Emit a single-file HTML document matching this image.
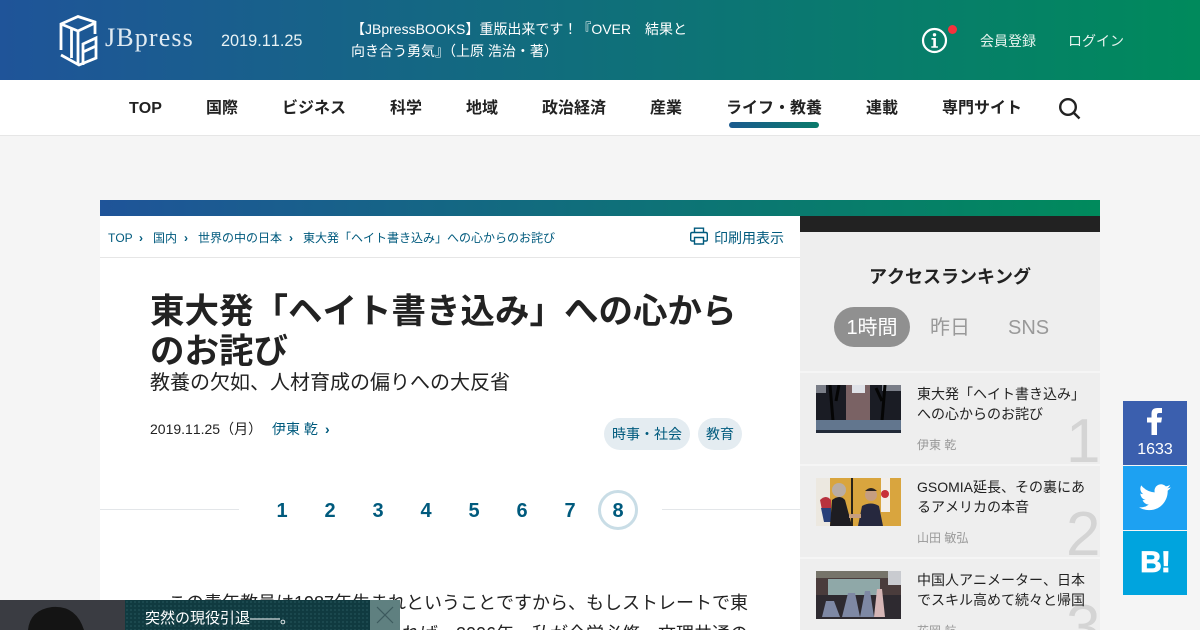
<!DOCTYPE html>
<html lang="ja"><head><meta charset="utf-8"><title>JBpress</title>
<style>
*{box-sizing:border-box;margin:0;padding:0}
html,body{width:1200px;height:630px;overflow:hidden}
body{position:relative;background:#f5f5f5;font-family:"Liberation Sans","Noto Sans CJK JP",sans-serif;color:#222;font-kerning:none}
.a{position:absolute;white-space:nowrap}
.grad{background:linear-gradient(90deg,#1f5499 0%,#008a5c 100%)}
.b{font-weight:bold}
.l{color:#005a7d}
</style></head><body>
<div class="a grad" style="left:0;top:0;width:1200px;height:80px"></div>
<svg class="a" style="left:58px;top:14px" width="42" height="54" viewBox="58 14 42 54" fill="none" stroke="#fff" stroke-width="2.800">
<path d="M61 50V24L78 16.500L95 22V34M61 24L78 31L95 23M78 31V65M71.500 29V58M61 55L79 65L96 58V38L83 44V65M83 52L96 46"/></svg>
<div class="a" style="left:105px;top:20px;font:26px/36px 'Liberation Serif','Noto Serif CJK SC',serif;color:#dfeaf2;letter-spacing:1.150px">JBpress</div>
<div class="a" style="left:221px;top:32px;font-size:16.300px;line-height:18px;color:#e8f2f4">2019.11.25</div>
<div class="a" style="left:351px;top:18px;font-size:14px;line-height:22px;color:#fff">【JBpressBOOKS】重版出来です！『OVER　結果と<br>向き合う勇気』（上原 浩治・著）</div>
<svg class="a" style="left:921px;top:27px" width="27" height="27" viewBox="0 0 27 27"><circle cx="13.500" cy="13.500" r="11.500" fill="none" stroke="#fff" stroke-width="2.200"/><circle cx="13.500" cy="7.800" r="1.700" fill="#fff"/><path d="M10.500 11h4.400v8.200h2v1.600h-6.600v-1.600h2v-6.600h-1.800z" fill="#fff"/></svg>
<div class="a" style="left:948px;top:25px;width:9px;height:9px;border-radius:50%;background:#f5313c"></div>
<div class="a" style="left:980px;top:32px;font-size:14px;line-height:18px;color:#e6f3ee">会員登録</div>
<div class="a" style="left:1068px;top:32px;font-size:14px;line-height:18px;color:#e6f3ee">ログイン</div>

<div class="a" style="left:0;top:80px;width:1200px;height:56px;background:#fff;border-bottom:1px solid #e6e6e6"></div>
<div class="a b" style="left:129px;top:99px;font-size:16px;line-height:20px">TOP</div>
<div class="a b" style="left:206px;top:99px;font-size:16px;line-height:20px">国際</div>
<div class="a b" style="left:282px;top:99px;font-size:16px;line-height:20px">ビジネス</div>
<div class="a b" style="left:390px;top:99px;font-size:16px;line-height:20px">科学</div>
<div class="a b" style="left:466px;top:99px;font-size:16px;line-height:20px">地域</div>
<div class="a b" style="left:542px;top:99px;font-size:16px;line-height:20px">政治経済</div>
<div class="a b" style="left:650px;top:99px;font-size:16px;line-height:20px">産業</div>
<div class="a b" style="left:726px;top:99px;font-size:16px;line-height:20px">ライフ・教養</div>
<div class="a b" style="left:866px;top:99px;font-size:16px;line-height:20px">連載</div>
<div class="a b" style="left:942px;top:99px;font-size:16px;line-height:20px">専門サイト</div>
<div class="a" style="left:729px;top:122px;width:90px;height:6px;border-radius:3px;background:linear-gradient(90deg,#1b5a8f,#0a7a6a)"></div>
<svg class="a" style="left:1058px;top:97px" width="23" height="23" viewBox="0 0 23 23" fill="none" stroke="#222" stroke-width="2.400"><circle cx="10" cy="10" r="7.800"/><path d="M15.600 15.600L21.500 21.500"/></svg>

<div class="a grad" style="left:100px;top:200px;width:1000px;height:16px"></div>
<div class="a" style="left:100px;top:216px;width:700px;height:414px;background:#fff"></div>
<div class="a" style="left:100px;top:257px;width:700px;height:1px;background:#e6e6e6"></div>
<div class="a l" style="left:108px;top:230px;font-size:12px;line-height:16px">TOP</div>
<div class="a l b" style="left:139px;top:230px;font-size:12px;line-height:16px">›</div>
<div class="a l" style="left:153px;top:230px;font-size:12px;line-height:16px">国内</div>
<div class="a l b" style="left:184px;top:230px;font-size:12px;line-height:16px">›</div>
<div class="a l" style="left:198px;top:230px;font-size:12px;line-height:16px">世界の中の日本</div>
<div class="a l b" style="left:289px;top:230px;font-size:12px;line-height:16px">›</div>
<div class="a l" style="left:303px;top:230px;font-size:12px;line-height:16px">東大発「ヘイト書き込み」への心からのお詫び</div>
<svg class="a" style="left:690px;top:227px" width="18" height="18" viewBox="0 0 18 18" fill="none" stroke="#005a7d" stroke-width="1.400"><path d="M4.500 5.500V1.200h9v4.300M4.500 14H2q-1.300 0-1.300-1.300V7q0-1.500 1.500-1.500h13.600q1.500 0 1.500 1.500v5.700q0 1.300-1.300 1.300h-2.500"/><path d="M4.500 10.500h9v6.500h-9z"/></svg>
<div class="a l" style="left:714px;top:229px;font-size:14px;line-height:18px">印刷用表示</div>

<div class="a b" style="left:150px;top:292px;font-size:34.500px;line-height:40px">東大発「ヘイト書き込み」への心から<br>のお詫び</div>
<div class="a" style="left:150px;top:371px;font-size:20px;line-height:24px">教養の欠如、人材育成の偏りへの大反省</div>
<div class="a" style="left:150px;top:420px;font-size:14px;line-height:18px">2019.11.25（月）</div>
<div class="a l" style="left:272px;top:420px;font-size:14px;line-height:18px">伊東 乾</div>
<div class="a l b" style="left:325px;top:420px;font-size:14px;line-height:18px">›</div>
<div class="a l" style="left:604px;top:418px;width:86px;height:32px;border-radius:16px;background:#e4ecf1;font-size:14px;line-height:32px;text-align:center">時事・社会</div>
<div class="a l" style="left:698px;top:418px;width:44px;height:32px;border-radius:16px;background:#e4ecf1;font-size:14px;line-height:32px;text-align:center">教育</div>

<div class="a" style="left:100px;top:509px;width:139px;height:1px;background:#e3e6e9"></div>
<div class="a" style="left:662px;top:509px;width:138px;height:1px;background:#e3e6e9"></div>
<div class="a l b" style="left:262px;top:499px;width:40px;text-align:center;font-size:20px;line-height:24px">1</div>
<div class="a l b" style="left:310px;top:499px;width:40px;text-align:center;font-size:20px;line-height:24px">2</div>
<div class="a l b" style="left:358px;top:499px;width:40px;text-align:center;font-size:20px;line-height:24px">3</div>
<div class="a l b" style="left:406px;top:499px;width:40px;text-align:center;font-size:20px;line-height:24px">4</div>
<div class="a l b" style="left:454px;top:499px;width:40px;text-align:center;font-size:20px;line-height:24px">5</div>
<div class="a l b" style="left:502px;top:499px;width:40px;text-align:center;font-size:20px;line-height:24px">6</div>
<div class="a l b" style="left:550px;top:499px;width:40px;text-align:center;font-size:20px;line-height:24px">7</div>
<div class="a l b" style="left:598px;top:490px;width:40px;height:40px;border:3px solid #c9dde6;border-radius:50%;text-align:center;font-size:20px;line-height:36px">8</div>

<div class="a" style="left:168px;top:591px;font-size:18px;line-height:24px">この青年教員は1987年生まれということですから、もしストレートで東</div>
<div class="a" style="left:150px;top:622px;height:8px;overflow:hidden;font-size:18px;line-height:24px">京大学に現役で合格入学していれば、2006年、私が全学必修、文理共通の</div>

<div class="a" style="left:800px;top:216px;width:300px;height:16px;background:#222"></div>
<div class="a" style="left:800px;top:232px;width:300px;height:139px;background:#eee"></div>
<div class="a b" style="left:800px;top:265px;width:300px;text-align:center;font-size:18px;line-height:24px">アクセスランキング</div>
<div class="a" style="left:834px;top:307px;width:76px;height:40px;border-radius:20px;background:#909090;color:#fff;font-size:20px;line-height:42px;text-align:center">1時間</div>
<div class="a" style="left:930px;top:316px;font-size:20px;line-height:24px;color:#999">昨日</div>
<div class="a" style="left:1008px;top:316px;font-size:20px;line-height:24px;color:#999">SNS</div>

<div class="a" style="left:800px;top:373px;width:300px;height:91px;background:#eee;overflow:hidden">
<div class="a" style="left:266px;top:29px;font:62px/80px 'Liberation Sans',sans-serif;color:#d4d4d4">1</div>
<svg class="a" style="left:16px;top:12px" width="85" height="48" viewBox="0 0 85 48"><rect width="85" height="48" fill="#1a1c24"/><path d="M30 0h24v36H30z" fill="#7a6264"/><path d="M36 0h13v8H36z" fill="#dfe2e8"/><path d="M0 0h10v8H0zM66 0h19v6H66z" fill="#7a7e88"/><path d="M14 0l3 36M23 0l-3 16M69 0l-3 36M60 3l6 13" stroke="#050505" stroke-width="3"/><rect y="35" width="85" height="13" fill="#62768e"/><rect y="45" width="85" height="3" fill="#222a38"/></svg>
<div class="a" style="left:117px;top:12px;font-size:14px;line-height:19.500px">東大発「ヘイト書き込み」<br>への心からのお詫び</div>
<div class="a" style="left:117px;top:64px;font-size:12px;line-height:16px;color:#999">伊東 乾</div></div>

<div class="a" style="left:800px;top:466px;width:300px;height:91px;background:#eee;overflow:hidden">
<div class="a" style="left:266px;top:29px;font:62px/80px 'Liberation Sans',sans-serif;color:#d4d4d4">2</div>
<svg class="a" style="left:16px;top:12px" width="85" height="48" viewBox="0 0 85 48"><rect width="85" height="48" fill="#d9a53e"/><rect width="14" height="48" fill="#ece8e0"/><path d="M4 22q6-6 11 0v20H8z" fill="#b8323e"/><path d="M5 30h10v14H8z" fill="#28407a"/><rect x="35" width="2" height="48" fill="#2a2418"/><rect x="65" width="9" height="34" fill="#f3eee8"/><circle cx="69" cy="16" r="4" fill="#c8303a"/><path d="M14 48l2-26q8-6 13 0l7 26z" fill="#1e1d22"/><circle cx="23" cy="12" r="7" fill="#b9ada4"/><path d="M42 48l4-20q9-5 17 0l4 20z" fill="#26283e"/><circle cx="55" cy="17" r="6" fill="#c69e80"/><path d="M49 13q6-6 12 0z" fill="#2a2420"/><rect x="33" y="36" width="12" height="4" fill="#c69e80"/></svg>
<div class="a" style="left:117px;top:12px;font-size:14px;line-height:19.500px">GSOMIA延長、その裏にあ<br>るアメリカの本音</div>
<div class="a" style="left:117px;top:64px;font-size:12px;line-height:16px;color:#999">山田 敏弘</div></div>

<div class="a" style="left:800px;top:559px;width:300px;height:71px;background:#eee;overflow:hidden">
<div class="a" style="left:266px;top:29px;height:42px;overflow:hidden;font:62px/80px 'Liberation Sans',sans-serif;color:#d4d4d4">3</div>
<svg class="a" style="left:16px;top:12px" width="85" height="48" viewBox="0 0 85 48"><rect width="85" height="48" fill="#4a3c3c"/><rect width="85" height="7" fill="#76746a"/><rect x="12" y="8" width="52" height="16" fill="#8fa8a8"/><rect y="24" width="85" height="24" fill="#2e2a30"/><path d="M6 46l4-16 8 0 6 16zM26 46l6-24 7 0 5 24zM44 46l5-26 5 0 4 26z" fill="#7e88a4"/><path d="M58 46l3-28 5 0 3 28z" fill="#d6b6b6"/><rect x="72" width="13" height="14" fill="#c9cbd0"/></svg>
<div class="a" style="left:117px;top:12px;font-size:14px;line-height:19.500px">中国人アニメーター、日本<br>でスキル高めて続々と帰国</div>
<div class="a" style="left:117px;top:64px;height:7px;overflow:hidden;font-size:12px;line-height:16px;color:#999">花岡 航</div></div>

<div class="a" style="left:1123px;top:401px;width:64px;height:64px;background:#3b5fae"></div>
<svg class="a" style="left:1146px;top:407px" width="18" height="28" viewBox="0 0 18 28"><path d="M5.500 28V15.500H1v-5h4.500V6.500Q5.500 1 11.500 1H16v5h-3q-2 0-2 2v2.500h5l-.8 5H11V28z" fill="#fff"/></svg>
<div class="a" style="left:1123px;top:441px;width:64px;text-align:center;font-size:16px;line-height:18px;color:#fff">1633</div>
<div class="a" style="left:1123px;top:466px;width:64px;height:64px;background:#1da1f2"></div>
<svg class="a" style="left:1139px;top:484px" width="32" height="27" viewBox="0 0 24 20"><path d="M24 2.400a9.800 9.800 0 0 1-2.800.8A5 5 0 0 0 23.300.5a9.800 9.800 0 0 1-3.100 1.200 4.900 4.900 0 0 0-8.400 4.500A14 14 0 0 1 1.700.9a4.900 4.900 0 0 0 1.500 6.600 4.900 4.900 0 0 1-2.200-.6 4.900 4.900 0 0 0 3.900 4.900 4.900 4.900 0 0 1-2.200.1 4.900 4.900 0 0 0 4.600 3.400A9.900 9.900 0 0 1 0 17.300 14 14 0 0 0 7.500 19.500c9.100 0 14.300-7.700 14-14.600A10 10 0 0 0 24 2.400z" fill="#fff"/></svg>
<div class="a" style="left:1123px;top:531px;width:64px;height:64px;background:#00a4de"></div>
<div class="a b" style="left:1123px;top:545px;width:64px;text-align:center;font-size:30px;line-height:36px;color:#fff;letter-spacing:-1px;-webkit-text-stroke:.8px #fff">B!</div>

<div class="a" style="left:0;top:600px;width:125px;height:30px;background:#3a3c42"></div>
<svg class="a" style="left:0;top:600px" width="125" height="30" viewBox="0 0 125 30"><path d="M28 30Q30 10 52 7Q76 5 84 30z" fill="#141414"/></svg>
<div class="a" style="left:125px;top:600px;width:245px;height:30px;background:#103a40;background-image:radial-gradient(#1f4c52 1px,transparent 1px);background-size:4px 4px"></div>
<div class="a" style="left:145px;top:609px;font-size:15px;line-height:20px;color:#fff">突然の現役引退――。</div>
<div class="a" style="left:370px;top:600px;width:30px;height:30px;background:#5f8080"></div>
<svg class="a" style="left:370px;top:600px" width="30" height="30" viewBox="0 0 30 30" stroke="#3d5a5e" stroke-width="1.200"><path d="M7 7L23 23M23 7L7 23"/></svg>
</body></html>
